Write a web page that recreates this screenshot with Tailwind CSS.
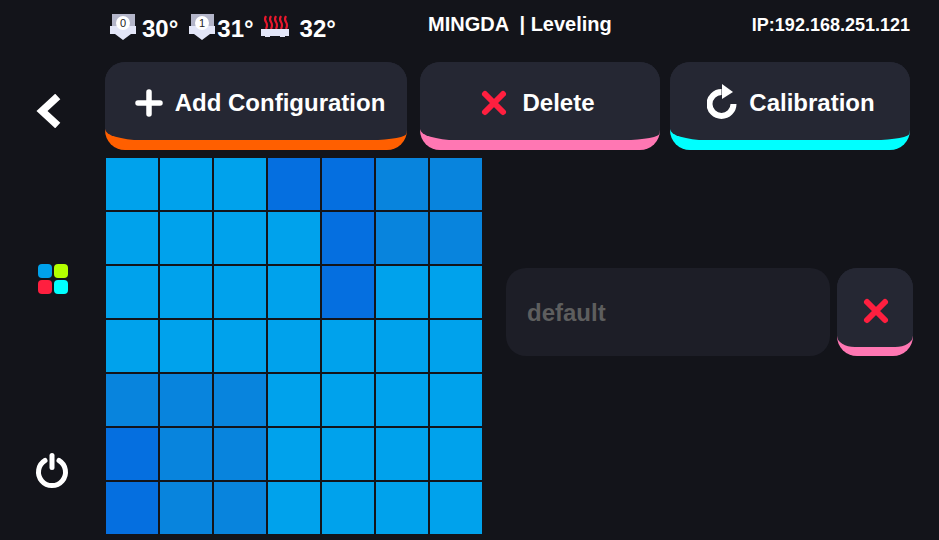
<!DOCTYPE html>
<html lang="en">
<head>
  <meta charset="UTF-8">
  <title>MINGDA Leveling</title>
  <script src="https://cdn.jsdelivr.net/npm/@tailwindcss/browser@4"></script>
</head>
<body class="bg-[#13141a] overflow-hidden">
  <div class="w-[939px] h-[540px] flex font-['Liberation_Sans',sans-serif] font-bold text-white">

    <!-- Sidebar -->
    <aside class="w-[105px] shrink-0 flex flex-col items-center">
      <div class="mt-[94px] ml-[-9px] h-[34px] flex items-center">
        <svg width="26" height="34" viewBox="0 0 26 34"><path d="M20 5 L7 17 L20 29" fill="none" stroke="#fff" stroke-width="7.5" stroke-linecap="square" stroke-linejoin="miter"/></svg>
      </div>
      <div class="mt-[136px] ml-[1px] grid grid-cols-2 gap-[2px]">
        <div class="w-[14px] h-[14px] rounded-[4px] bg-[#00a2ec]"></div>
        <div class="w-[14px] h-[14px] rounded-[4px] bg-[#b4ff00]"></div>
        <div class="w-[14px] h-[14px] rounded-[4px] bg-[#ff1f3f]"></div>
        <div class="w-[14px] h-[14px] rounded-[4px] bg-[#00ffff]"></div>
      </div>
      <div class="mt-[157px] ml-[-1px]">
        <svg width="34" height="39" viewBox="0 0 34 39"><path d="M10 9.5 A13.5 13.5 0 1 0 24 9.5" fill="none" stroke="#fff" stroke-width="5" stroke-linecap="round"/><path d="M17 4.5 V16.5" stroke="#fff" stroke-width="5" stroke-linecap="round"/></svg>
      </div>
    </aside>

    <main class="flex-1 min-w-0">
      <!-- Status bar -->
      <header class="h-[62px] pr-[29px] flex items-start pt-[14px]">
        <div class="flex items-center ml-[5px] w-[318px] h-[27px] text-[24px] leading-none">
          <svg width="26" height="27" viewBox="0 0 26 27" class="shrink-0"><path d="M2 0 H25 V12 H2 Z" fill="#b3b5c9"/><path d="M0 12 H26 V20 H21 L13 26 L5 20 H0 Z" fill="#e3e6f8"/><circle cx="13" cy="9" r="7" fill="#fff"/><text x="13" y="13" text-anchor="middle" font-size="11" font-weight="400" fill="#222">0</text></svg>
          <span class="ml-[6px] mt-[3px]">30°</span>
          <svg width="26" height="27" viewBox="0 0 26 27" class="shrink-0 ml-[11px]"><path d="M2 0 H25 V12 H2 Z" fill="#b3b5c9"/><path d="M0 12 H26 V20 H21 L13 26 L5 20 H0 Z" fill="#e3e6f8"/><circle cx="13" cy="9" r="7" fill="#fff"/><text x="13" y="13" text-anchor="middle" font-size="11" font-weight="400" fill="#222">1</text></svg>
          <span class="ml-[2px] mt-[3px]">31°</span>
          <svg width="30" height="26" viewBox="0 0 30 26" class="shrink-0 ml-[7px]"><g fill="none" stroke="#e8182c" stroke-width="2.2"><path d="M5 1 Q3 4 5 7 Q7 10 5 14"/><path d="M10 1 Q8 4 10 7 Q12 10 10 14"/><path d="M15 1 Q13 4 15 7 Q17 10 15 14"/><path d="M20 1 Q18 4 20 7 Q22 10 20 14"/><path d="M25 1 Q23 4 25 7 Q27 10 25 14"/></g><path d="M0 14 H28 V21 H24 V22 H19 V21 H9 V22 H4 V21 H0 Z" fill="#e3e6f8"/></svg>
          <span class="ml-[9px] mt-[3px]">32°</span>
        </div>
        <div class="text-[20px] leading-[20px] whitespace-pre">MINGDA  | Leveling</div>
        <div class="ml-auto text-[18px] leading-[22px]">IP:192.168.251.121</div>
      </header>

      <!-- Action buttons -->
      <div class="flex gap-[13px] text-[24px]">
        <div class="w-[302px] h-[88px] rounded-[20px] overflow-hidden bg-[linear-gradient(#252733_50%,#ff5f00_50%)]">
          <div class="h-[78px] pt-[4px] pl-[8px] bg-[#252733] rounded-bl-[36px_11px] rounded-br-[36px_7px] flex items-center justify-center gap-[12px]">
            <svg width="28" height="28" viewBox="0 0 28 28"><path d="M14 3 V25 M3 14 H25" stroke="#fff" stroke-width="5.5" stroke-linecap="round"/></svg>
            <span>Add Configuration</span>
          </div>
        </div>
        <div class="w-[240px] h-[88px] rounded-[20px] overflow-hidden bg-[linear-gradient(#252733_50%,#ff77b3_50%)]">
          <div class="h-[78px] pt-[4px] pr-[5px] bg-[#252733] rounded-bl-[36px_11px] rounded-br-[36px_7px] flex items-center justify-center gap-[14px]">
            <svg width="28" height="28" viewBox="0 0 28 28"><path d="M5 5 L23 23 M23 5 L5 23" stroke="#ff1f3f" stroke-width="6" stroke-linecap="round"/></svg>
            <span>Delete</span>
          </div>
        </div>
        <div class="w-[240px] h-[88px] rounded-[20px] overflow-hidden bg-[linear-gradient(#252733_50%,#00ffff_50%)] ml-[-3px]">
          <div class="h-[78px] bg-[#252733] rounded-bl-[36px_11px] rounded-br-[36px_7px] flex items-center justify-center gap-[11px]">
            <svg width="31" height="35" viewBox="0 0 31 35" class="ml-[2px]"><path d="M26.5 20 A12 12 0 1 1 14.5 8" fill="none" stroke="#fff" stroke-width="6"/><path d="M15 0 L26 8 L15 15 Z" fill="#fff"/></svg>
            <span class="mt-[4px]">Calibration</span>
          </div>
        </div>
      </div>

      <div class="flex mt-[8px]">
        <!-- Mesh -->
        <div id="mesh" class="ml-[1px] grid grid-cols-[repeat(7,52px)] auto-rows-[52px] gap-[2px]"></div>

        <!-- Profile row -->
        <div class="ml-[24px] mt-[110px] flex gap-[7px] h-[88px]">
          <div class="w-[324px] rounded-[20px] bg-[#1d1e27] pl-[21px] pt-[2px] flex items-center text-[24px] text-[#5e5e5e]">default</div>
          <div class="w-[76px] rounded-[20px] overflow-hidden bg-[linear-gradient(#252733_50%,#ff77b3_50%)]">
            <div class="h-[79px] pt-[7px] pl-[1px] bg-[#252733] rounded-bl-[18px_11px] rounded-br-[18px_11px] flex items-center justify-center">
              <svg width="28" height="28" viewBox="0 0 28 28"><path d="M5 5 L23 23 M23 5 L5 23" stroke="#ff1f3f" stroke-width="6" stroke-linecap="round"/></svg>
            </div>
          </div>
        </div>
      </div>
    </main>
  </div>

  <script>
    // bed mesh colours, row by row
    const colors = { L: "bg-[#00a2ec]", M: "bg-[#0884dd]", D: "bg-[#056fe0]" };
    const rows = ["LLLDDMM", "LLLLDMM", "LLLLDLL", "LLLLLLL", "MMMLLLL", "DMMLLLL", "DMMLLLL"];
    const mesh = document.getElementById("mesh");
    rows.join("").split("").forEach((c) => {
      const cell = document.createElement("div");
      cell.className = colors[c];
      mesh.appendChild(cell);
    });
  </script>
</body>
</html>
